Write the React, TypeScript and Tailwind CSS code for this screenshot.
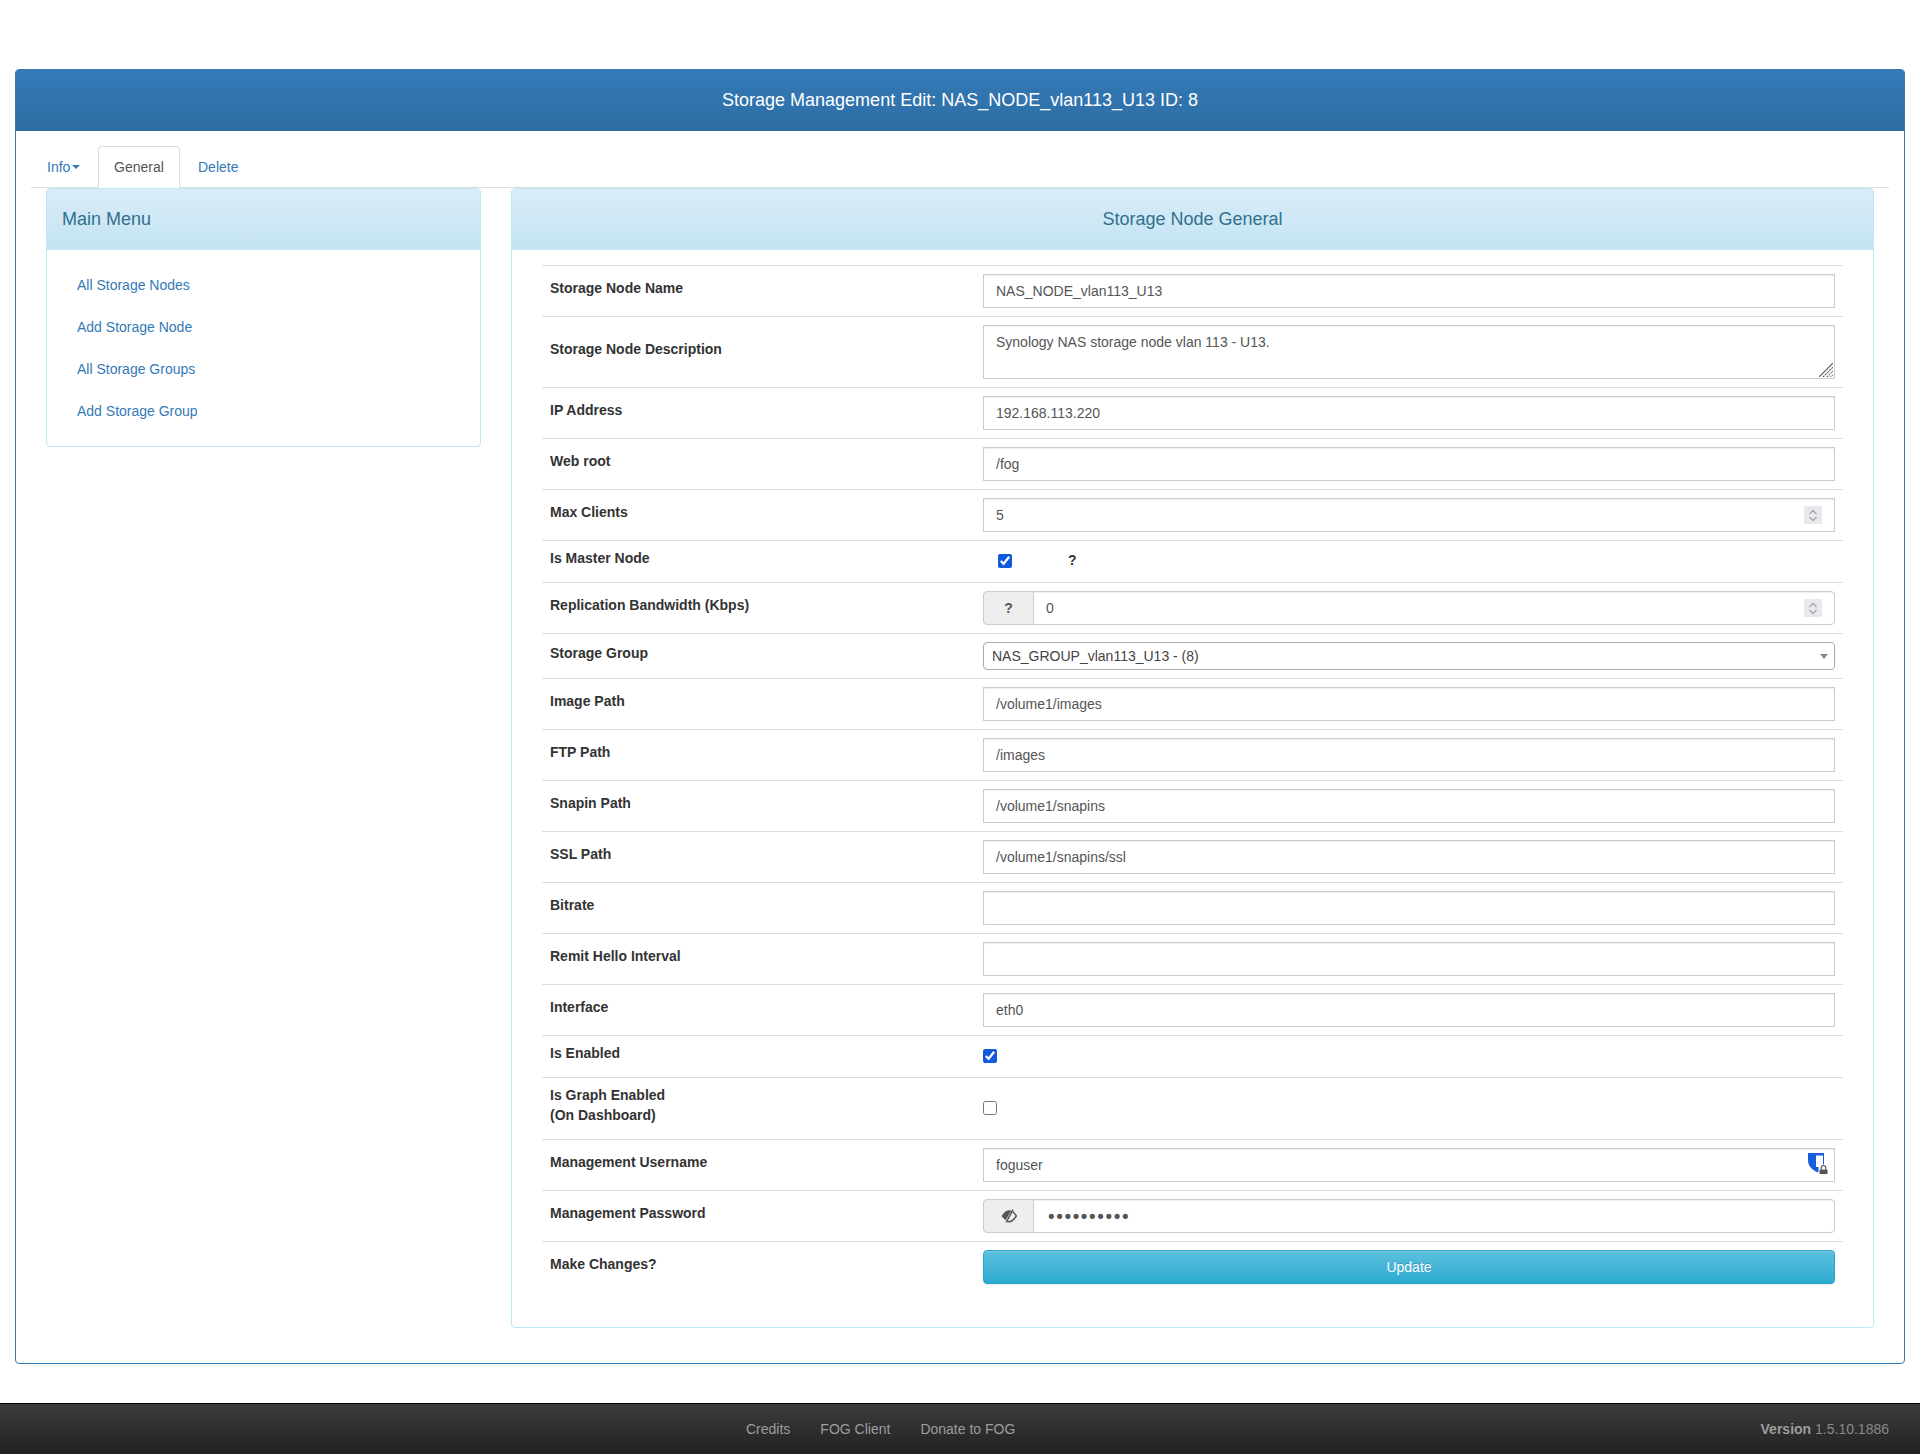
import React from "react";

const F = "font-['Liberation_Sans',Arial,sans-serif]";
const inputCls =
  "block w-full h-[34px] border border-[#ccc] bg-white px-[12px] text-[14px] text-[#555] shadow-[inset_0_1px_1px_rgba(0,0,0,0.075)] outline-none ";

function Label({ children }: { children: React.ReactNode }) {
  return <div className="pb-[7px] text-[14px] font-bold leading-[20px] text-[#333]">{children}</div>;
}

function Row({ label, children, cls = "py-2" }: { label: React.ReactNode; children: React.ReactNode; cls?: string }) {
  return (
    <div className={"flex border-t border-[#ddd] " + cls}>
      <div className="flex w-[433px] shrink-0 items-center pl-2">
        <Label>{label}</Label>
      </div>
      <div className="flex min-w-0 flex-1 items-center pl-2 pr-2">{children}</div>
    </div>
  );
}

function Spin() {
  return (
    <span className="absolute right-[13px] top-[8px] flex h-[18px] w-[18px] flex-col items-center justify-center gap-[1px] bg-[#e9e9ed]">
      <svg width="10" height="6" viewBox="0 0 10 6" fill="none" stroke="#a5a5aa" strokeWidth="1.3"><path d="M1.5 5 5 1.5 8.500 5" /></svg>
      <svg width="10" height="6" viewBox="0 0 10 6" fill="none" stroke="#a5a5aa" strokeWidth="1.3"><path d="M1.5 1 5 4.500 8.500 1" /></svg>
    </span>
  );
}

function TextRow({ label, value = "" }: { label: string; value?: string }) {
  return (
    <Row label={label}>
      <input className={inputCls + F} defaultValue={value} />
    </Row>
  );
}

function Addon({ children }: { children: React.ReactNode }) {
  return (
    <span className="flex h-[34px] w-[51px] shrink-0 items-center justify-center rounded-l-[4px] border border-[#ccc] bg-[#eee] text-[14px] font-bold text-[#555]">
      {children}
    </span>
  );
}

const Check = ({ on, cls = "" }: { on?: boolean; cls?: string }) => (
  <input type="checkbox" defaultChecked={on} className={"m-0 mb-[2px] h-[14px] w-[14px] accent-[#0f5bdc] " + cls} />
);

function PanelHead({ children, cls = "" }: { children: React.ReactNode; cls?: string }) {
  return (
    <div className={"flex h-[61px] items-center bg-gradient-to-b from-[#d9edf7] to-[#c4e3f3] px-[15px] text-[18px] text-[#31708f] " + cls}>
      {children}
    </div>
  );
}

export default function App() {
  return (
    <div className={"flex h-[1454px] w-[1920px] flex-col bg-white text-[14px] text-[#333] " + F}>
      <div className="px-[15px] pt-[69px]">
        <div className="rounded-[4px] border border-[#337ab7]">
          <div className="flex h-[61px] items-center justify-center rounded-t-[3px] bg-gradient-to-b from-[#337ab7] to-[#2e6da4] text-[18px] text-white">
            Storage Management Edit: NAS_NODE_vlan113_U13 ID: 8
          </div>
          <div className="p-[15px]">
            <div className="flex h-[42px] border-b border-[#ddd]">
              <a className="mr-[2px] flex h-[42px] w-[65px] items-center pl-[16px] text-[#337ab7]">
                Info<span className="ml-[2px] h-0 w-0 border-x-[4px] border-t-[4px] border-x-transparent border-t-[#337ab7]" />
              </a>
              <a className="mr-[2px] flex h-[42px] w-[82px] items-center justify-center rounded-t-[4px] border border-[#ddd] border-b-white bg-white text-[#555]">
                General
              </a>
              <a className="flex h-[42px] items-center px-[16px] text-[#337ab7]">Delete</a>
            </div>
            <div className="mb-[20px] flex items-start gap-[30px] px-[15px]">
              <div className="w-[435px] shrink-0 overflow-hidden rounded-[4px] border border-[#bce8f1] bg-white">
                <PanelHead>Main Menu</PanelHead>
                <div className="px-[15px] py-[14px]">
                  {["All Storage Nodes", "Add Storage Node", "All Storage Groups", "Add Storage Group"].map((t) => (
                    <a key={t} className="flex h-[42px] items-center px-[15px] text-[#337ab7]">{t}</a>
                  ))}
                </div>
              </div>
              <div className="min-w-0 flex-1 overflow-hidden rounded-[4px] border border-[#bce8f1] bg-white">
                <PanelHead cls="justify-center">Storage Node General</PanelHead>
                <div className="px-[30px] pb-[35px] pt-[15px]">
                  <TextRow label="Storage Node Name" value="NAS_NODE_vlan113_U13" />
                  <Row label="Storage Node Description">
                    <div className="relative w-full">
                      <textarea
                        className={"block h-[54px] w-full resize-none border border-[#ccc] bg-white px-[12px] py-[6px] text-[14px] leading-[20px] text-[#555] shadow-[inset_0_1px_1px_rgba(0,0,0,0.075)] outline-none " + F}
                        defaultValue="Synology NAS storage node vlan 113 - U13."
                      />
                      <svg className="pointer-events-none absolute bottom-[2px] right-[2px]" width="14" height="14" viewBox="0 0 14 14" stroke="#555" fill="none" strokeWidth="1.1">
                        <path d="M0 14 14 0" />
                        <path d="M4 14 14 4" strokeDasharray="2 1" />
                        <path d="M8 14 14 8" strokeDasharray="1.500 1" />
                        <path d="M11.500 14 14 11.500" strokeDasharray="1 1" />
                      </svg>
                    </div>
                  </Row>
                  <TextRow label="IP Address" value="192.168.113.220" />
                  <TextRow label="Web root" value="/fog" />
                  <Row label="Max Clients">
                    <div className="relative w-full">
                      <input className={inputCls + F} defaultValue="5" />
                      <Spin />
                    </div>
                  </Row>
                  <Row label="Is Master Node" cls="h-[42px] items-center">
                    <Check on cls="ml-[15px]" />
                    <span className="mb-[2px] ml-[56px] text-[14px] font-bold">?</span>
                  </Row>
                  <Row label="Replication Bandwidth (Kbps)">
                    <div className="relative flex w-full">
                      <Addon>?</Addon>
                      <input className={inputCls + F + " -ml-px rounded-r-[4px]"} defaultValue="0" />
                      <Spin />
                    </div>
                  </Row>
                  <Row label="Storage Group">
                    <div className="relative flex h-[28px] w-full items-center rounded-[4px] border border-[#aaa] bg-white pl-[8px] text-[#444]">
                      NAS_GROUP_vlan113_U13 - (8)
                      <span className="absolute right-[6px] top-[11px] h-0 w-0 border-x-[4px] border-t-[5px] border-x-transparent border-t-[#888]" />
                    </div>
                  </Row>
                  <TextRow label="Image Path" value="/volume1/images" />
                  <TextRow label="FTP Path" value="/images" />
                  <TextRow label="Snapin Path" value="/volume1/snapins" />
                  <TextRow label="SSL Path" value="/volume1/snapins/ssl" />
                  <TextRow label="Bitrate" />
                  <TextRow label="Remit Hello Interval" />
                  <TextRow label="Interface" value="eth0" />
                  <Row label="Is Enabled" cls="h-[42px] items-center">
                    <Check on />
                  </Row>
                  <Row label={<>Is Graph Enabled<br />(On Dashboard)</>} cls="h-[62px] items-center">
                    <Check />
                  </Row>
                  <Row label="Management Username">
                    <div className="relative w-full">
                      <input className={inputCls + F} defaultValue="foguser" />
                      <svg className="absolute right-[7px] top-[5px]" width="20" height="21" viewBox="0 0 20 21">
                        <path d="M0 0h16v13h-3l-3 6.500C4 17 0 13 0 7z" fill="#175ddc" />
                        <path d="M8 2.500h7V14H8z" fill="#fff" />
                        <rect x="10.500" y="11.500" width="9.500" height="9.500" fill="#fff" />
                        <rect x="11.500" y="16.500" width="8" height="4.500" rx="0.500" fill="#555" />
                        <path d="M13.300 16.500v-1.800a2.200 2.200 0 0 1 4.400 0v1.800" fill="none" stroke="#555" strokeWidth="1.200" />
                      </svg>
                    </div>
                  </Row>
                  <Row label="Management Password">
                    <div className="flex w-full">
                      <Addon>
                        <svg width="16" height="14" viewBox="0 0 14 12">
                          <path d="M9 1.200C8.300 1 7.700 1 7 1 4.500 1 2.500 3 .5 6 1.500 7.500 2.800 8.800 4 9.700z" fill="#555" />
                          <path d="M10 2.200C11.300 3 12.500 4.300 13.500 6 11.500 9 9.500 11 7 11 6.500 11 6 10.900 5.500 10.700" fill="none" stroke="#555" strokeWidth="1.200" />
                          <path d="M10.500 .5 4.500 11.500" fill="none" stroke="#555" strokeWidth="1.300" />
                        </svg>
                      </Addon>
                      <input type="password" className={inputCls + "-ml-px rounded-r-[4px] font-['DejaVu_Sans',sans-serif] !text-[18px] tracking-[-2.4px]"} defaultValue="fogpasswd1" />
                    </div>
                  </Row>
                  <Row label="Make Changes?">
                    <button className="flex h-[34px] w-full items-center justify-center rounded-[4px] border border-[#28a4c9] bg-gradient-to-b from-[#5bc0de] to-[#2aabd2] text-[14px] text-white shadow-[inset_0_1px_0_rgba(255,255,255,0.15),0_1px_1px_rgba(0,0,0,0.075)] [text-shadow:0_-1px_0_rgba(0,0,0,0.2)]">
                      Update
                    </button>
                  </Row>
                </div>
              </div>
            </div>
          </div>
        </div>
      </div>
      <div className="mt-[39px] flex h-[51px] items-center border-t border-black bg-gradient-to-b from-[#3c3c3c] to-[#222] pl-[746px] pr-[31px] text-[#9d9d9d]">
        <a>Credits</a>
        <a className="ml-[30px]">FOG Client</a>
        <a className="ml-[30px]">Donate to FOG</a>
        <span className="ml-auto text-[#8a8a8a]"><b className="text-[#9d9d9d]">Version</b> 1.5.10.1886</span>
      </div>
    </div>
  );
}
